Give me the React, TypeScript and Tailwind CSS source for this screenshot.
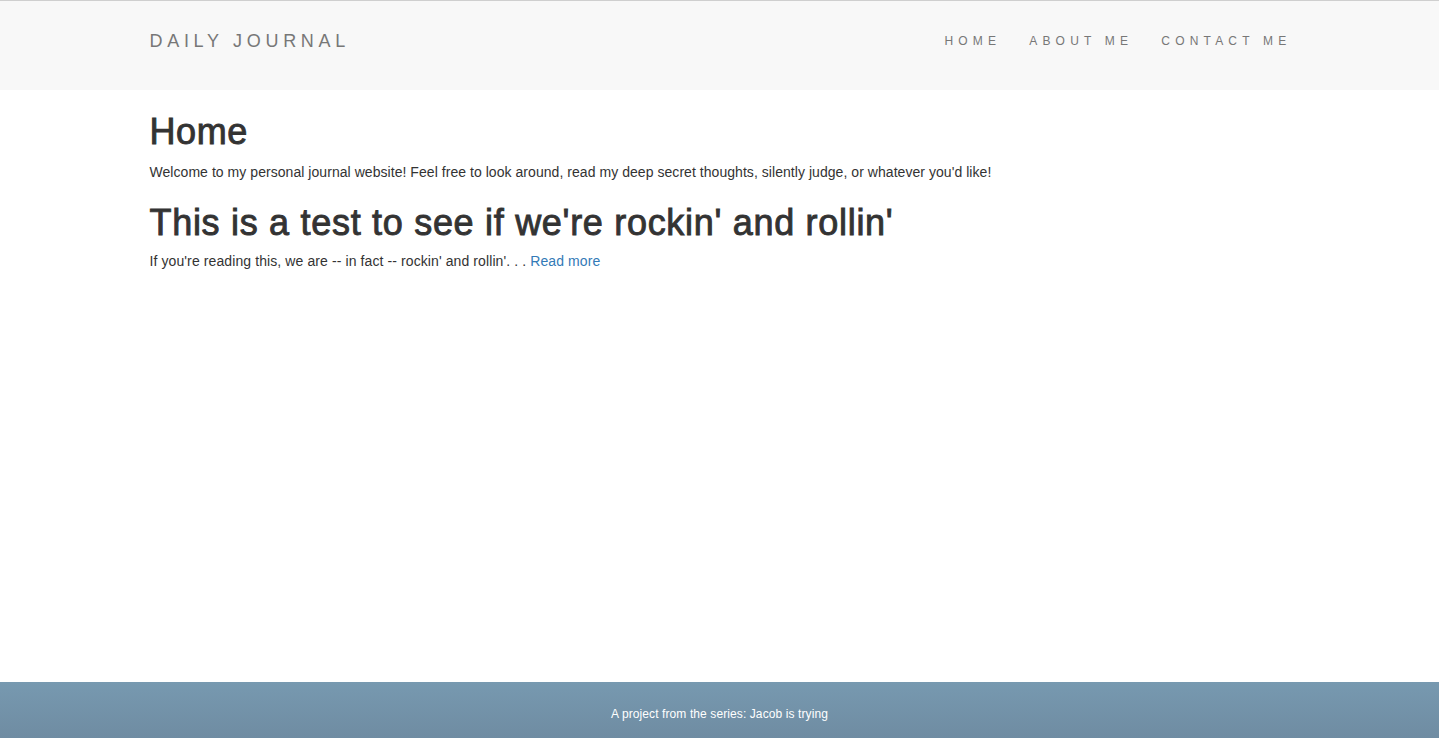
const navLinks = ["HOME", "ABOUT ME", "CONTACT ME"];

const Header = () => {
  return (
    <div className="border-t border-[#cfcfcf] bg-[#f8f8f8] h-[90px]">
      <div className="w-[1140px] mx-auto flex justify-between pt-[30px]">
        <span className="text-[18px] leading-[20px] tracking-[4.7px] text-[#777]">DAILY JOURNAL</span>
        <div className="flex gap-[28px] mr-[-2px] pt-[2px]">
          {navLinks.map((link) => (
            <span key={link} className="text-[12px] leading-[16px] tracking-[5.2px] text-[#777]">
              {link}
            </span>
          ))}
        </div>
      </div>
    </div>
  );
};

export default function App() {
  return (
    <div className="h-screen flex flex-col bg-white text-[#333]" style={{ fontFamily: '"Liberation Sans", Arial, sans-serif' }}>
      <Header />
      <div className="w-[1140px] mx-auto pt-[22px]">
        <h1 className="text-[36px] leading-[40px] tracking-[0.6px] [-webkit-text-stroke:0.9px_#333]">Home</h1>
        <p className="text-[14px] leading-[20px] tracking-[0.05px] mt-[10px]">
          Welcome to my personal journal website! Feel free to look around, read my deep secret thoughts, silently judge, or whatever you'd like!
        </p>
        <h1 className="text-[36px] leading-[40px] tracking-[0.7px] [-webkit-text-stroke:0.9px_#333] mt-[21px]">This is a test to see if we're rockin' and rollin'</h1>
        <p className="text-[14px] leading-[20px] tracking-[0.1px] mt-[8px]">
          If you're reading this, we are -- in fact -- rockin' and rollin'. . . <a className="text-[#337ab7]">Read more</a>
        </p>
      </div>
      <div className="mt-auto h-[56px] bg-gradient-to-b from-[#7799b0] to-[#6f8ca2] flex items-center justify-center pt-[8px]">
        <span className="text-[12px] tracking-[0.1px] text-white">A project from the series: Jacob is trying</span>
      </div>
    </div>
  );
}
